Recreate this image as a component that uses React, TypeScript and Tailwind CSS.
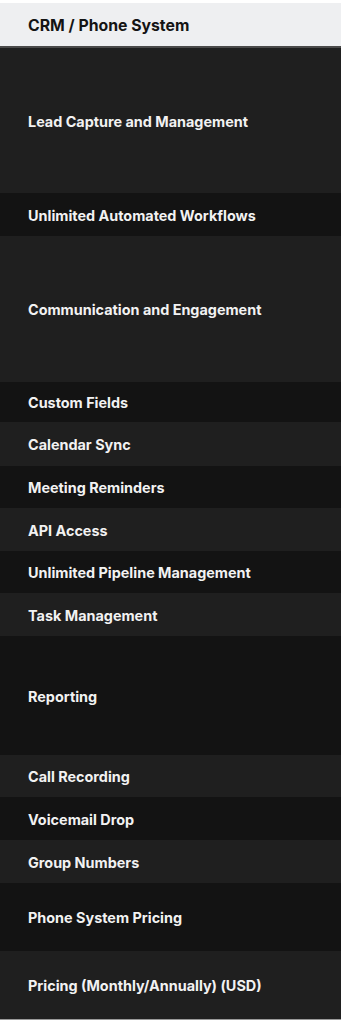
import React from 'react';

const rows = [
  { label: 'Lead Capture and Management', h: 'h-[145px]', bg: 'bg-[#1f1f1f]' },
  { label: 'Unlimited Automated Workflows', h: 'h-[43px]', bg: 'bg-[#131313]' },
  { label: 'Communication and Engagement', h: 'h-[146px]', bg: 'bg-[#1f1f1f]' },
  { label: 'Custom Fields', h: 'h-[40px]', bg: 'bg-[#131313]' },
  { label: 'Calendar Sync', h: 'h-[44px]', bg: 'bg-[#1f1f1f]' },
  { label: 'Meeting Reminders', h: 'h-[42px]', bg: 'bg-[#131313]' },
  { label: 'API Access', h: 'h-[43px]', bg: 'bg-[#1f1f1f]' },
  { label: 'Unlimited Pipeline Management', h: 'h-[42px]', bg: 'bg-[#131313]' },
  { label: 'Task Management', h: 'h-[43px]', bg: 'bg-[#1f1f1f]' },
  { label: 'Reporting', h: 'h-[119px]', bg: 'bg-[#131313]' },
  { label: 'Call Recording', h: 'h-[42px]', bg: 'bg-[#1f1f1f]' },
  { label: 'Voicemail Drop', h: 'h-[43px]', bg: 'bg-[#131313]' },
  { label: 'Group Numbers', h: 'h-[43px]', bg: 'bg-[#1f1f1f]' },
  { label: 'Phone System Pricing', h: 'h-[68px]', bg: 'bg-[#131313]' },
  { label: 'Pricing (Monthly/Annually) (USD)', h: 'h-[68px]', bg: 'bg-[#1f1f1f]' },
];

export default function App() {
  return (
    <div className="w-[341px] min-h-[1024px] bg-white pt-[3px] font-['Inter',sans-serif]">
      <div className="h-[45px] bg-[#eeeff1] flex items-center px-7 pt-[3px] border-b-2 border-[#4a4a4a]">
        <span className="text-[15.8px] font-bold text-[#141414]">CRM / Phone System</span>
      </div>
      {rows.map((row, idx) => (
        <div key={idx} className={`${row.h} ${row.bg} flex items-center px-7 pt-[2px]`}>
          <span className="text-[14.4px] font-bold text-[#f2f2f2]">{row.label}</span>
        </div>
      ))}
      <div className="h-[1px] bg-[#9a9a9a]" />
    </div>
  );
}
